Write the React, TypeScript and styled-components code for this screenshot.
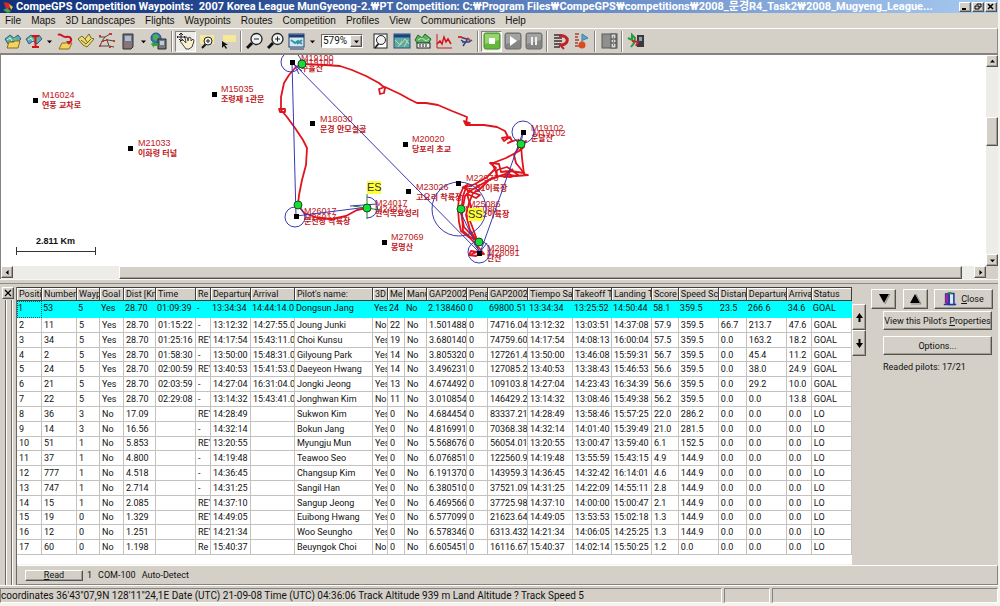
import React from "react";
import styled, { createGlobalStyle, css } from "styled-components";

const FACE = "#d4d0c8";
const SANS = `"Liberation Sans", "Noto Sans CJK KR", sans-serif`;
const COMPACT = `"Roboto", "Noto Sans CJK KR", sans-serif`;

const GlobalStyle = createGlobalStyle`
  *, *::before, *::after { box-sizing: border-box; }
  body { margin: 0; background: #f4f3ee; font-family: ${SANS}; color: #111; }
  button, select { font: inherit; color: inherit; margin: 0; border-radius: 0; }
`;

const raised = css`
  border: 1px solid;
  border-color: #fff #55534f #55534f #fff;
  box-shadow: inset -1px -1px 0 #a09d96;
`;

const Window = styled.div`
  display: flex;
  flex-direction: column;
  min-height: 100vh;
  padding-right: 2px;
`;

/* Title bar */
const TitleBar = styled.header`
  display: flex;
  align-items: center;
  gap: 2px;
  height: 13px;
  padding: 0 1px 0 2px;
  background: linear-gradient(90deg, #12317a 0%, #24488f 22%, #5f84bf 55%, #86a9da 78%, #a6caf0 100%);
`;
const Title = styled.h1`
  flex: 1;
  min-width: 0;
  margin: 0;
  overflow: hidden;
  white-space: pre;
  font-family: ${COMPACT};
  font-size: 11px;
  line-height: 13px;
  font-weight: 700;
  color: #fff;
`;
const CaptionButtons = styled.div`
  display: flex;
  gap: 1px;
`;
const CaptionButton = styled.button`
  ${raised}
  display: grid;
  place-items: center;
  width: 12px;
  height: 10px;
  padding: 0;
  background: ${FACE};
`;

/* Menu */
const MenuBar = styled.nav`
  display: flex;
  align-items: center;
  gap: 10px;
  height: 15px;
  padding: 0 5px;
  background: #d9d5cb;
`;
const MenuItem = styled.button`
  padding: 0;
  border: 0;
  background: none;
  font-size: 10px;
  line-height: 14px;
  white-space: nowrap;
`;

/* Toolbar */
const ToolBar = styled.div`
  display: flex;
  align-items: center;
  height: 27px;
  padding: 0 2px;
  background: ${FACE};
  border: solid #fff;
  border-width: 1px 0 0;
  border-right: 1px solid #8a8882;
  border-bottom: 2px solid #85837f;
`;
const Tool = styled.button<{ $on?: boolean }>`
  display: grid;
  place-items: center;
  flex: none;
  width: 21px;
  height: 21px;
  padding: 0;
  border: 1px solid;
  border-color: ${(p) => (p.$on ? "#85837f #fff #fff #85837f" : "transparent")};
  background: ${(p) => (p.$on ? "#efede8" : "none")};
`;
const DropArrow = styled.button`
  flex: none;
  width: 10px;
  height: 20px;
  padding: 0;
  border: 0;
  background: none;
  display: grid;
  place-items: center;
`;
const Separator = styled.span`
  flex: none;
  width: 2px;
  height: 21px;
  margin: 0 2px;
  border-left: 1px solid #85837f;
  border-right: 1px solid #fff;
`;
const ZoomBox = styled.label`
  position: relative;
  display: block;
  flex: none;
  width: 42px;
  margin: 0 7px 0 4px;
`;
const ZoomSelect = styled.select`
  appearance: none;
  display: block;
  width: 100%;
  height: 14px;
  padding: 0 12px 0 1px;
  border: 1px solid;
  border-color: #6b6964 #fff #fff #6b6964;
  background: #fff;
  font-family: ${COMPACT};
  font-size: 10px;
  line-height: 12px;
`;
const ZoomArrow = styled.span`
  ${raised}
  position: absolute;
  right: 1px;
  top: 1px;
  width: 12px;
  height: 12px;
  display: grid;
  place-items: center;
  background: ${FACE};
  pointer-events: none;
`;

/* Map */
const MapArea = styled.section`
  display: grid;
  grid-template-columns: minmax(0, 1fr) 12px;
  grid-template-rows: 211px 13px;
  border-left: 1px solid #85837f;
  background: ${FACE};
`;
const MapCanvas = styled.div`
  overflow: hidden;
  background: #fff;
`;
const MapSvg = styled.svg`
  display: block;
  font-family: ${SANS};
`;
const ScrollTrack = styled.div<{ $vertical?: boolean }>`
  display: flex;
  flex-direction: ${(p) => (p.$vertical ? "column" : "row")};
  background: #eeece8;
`;
const ScrollButton = styled.button`
  ${raised}
  flex: none;
  width: 12px;
  height: 12px;
  padding: 0;
  display: grid;
  place-items: center;
  background: ${FACE};
`;
const ScrollGap = styled.span<{ $grow: number }>`
  flex: ${(p) => p.$grow} 1 0;
`;
const ScrollThumb = styled.span<{ $grow: number }>`
  ${raised}
  flex: ${(p) => p.$grow} 1 0;
  background: ${FACE};
`;
const Splitter = styled.div`
  height: 8px;
  background: ${FACE};
  border-top: 1px solid #f6f5f2;
  box-shadow: inset 0 3px 0 ${FACE}, inset 0 4px 0 #8d8b86;
`;

/* Docked results panel */
const Dock = styled.section`
  display: flex;
  background: ${FACE};
`;
const Grip = styled.div`
  display: flex;
  flex-direction: column;
  align-items: center;
  flex: none;
  width: 17px;
  border-right: 1px solid #6b6964;
`;
const GripClose = styled(CaptionButton)`
  height: 12px;
`;
const GripLines = styled.div`
  flex: 1;
  width: 7px;
  margin-top: 1px;
  border: solid #6b6964;
  border-width: 0 1px;
  box-shadow: inset 1px 0 0 #fff, 1px 0 0 #fff;
`;
const DockBody = styled.div`
  flex: 1;
  min-width: 0;
  display: flex;
  flex-direction: column;
`;
const DockMain = styled.div`
  display: flex;
`;
const TableBox = styled.div`
  flex: 835 1 0;
  min-width: 0;
  height: 278px;
  overflow: hidden;
  background: #fff;
  border-bottom: 1px solid #f4f2ee;
`;
const Results = styled.table`
  width: 100%;
  height: 268px;
  table-layout: fixed;
  border-collapse: separate;
  border-spacing: 0;
  font-family: ${COMPACT};
  font-size: 9px;
  line-height: 12px;
`;
const HeadCell = styled.th`
  height: 14px;
  padding: 0 0 0 2px;
  overflow: hidden;
  white-space: nowrap;
  text-align: left;
  font-weight: 400;
  background: ${FACE};
  border: solid #3f3e3b;
  border-width: 1px 1px 1px 0;
  box-shadow: inset 1px 1px 0 #fff;
`;
const Cell = styled.td`
  padding: 0 0 0 2px;
  overflow: hidden;
  white-space: nowrap;
  border: solid #c4c2be;
  border-width: 0 1px 1px 0;
`;
const Row = styled.tr<{ $selected?: boolean }>`
  ${(p) =>
    p.$selected &&
    css`
      height: 17px;
      background: #00ffff;
      ${Cell} {
        padding: 0 0 3px 1px;
        border-color: #00ffff;
      }
      ${Cell}:first-child {
        outline: 1px dotted #14585c;
        outline-offset: -1px;
      }
    `}
`;
const SidePanel = styled.aside`
  flex: 146 1 0;
  min-width: 0;
  display: flex;
  gap: 5px;
  font-family: ${COMPACT};
  font-size: 9px;
  line-height: 12px;
`;
const Mover = styled.div`
  display: flex;
  flex-direction: column;
  width: 14px;
  margin-top: 17px;
`;
const PushButton = styled.button<{ $w?: number; $h?: number }>`
  ${raised}
  display: flex;
  align-items: center;
  justify-content: center;
  gap: 4px;
  flex: none;
  width: ${(p) => (p.$w ? `${p.$w}px` : "100%")};
  height: ${(p) => p.$h ?? 19}px;
  padding: 0;
  background: ${FACE};
  white-space: nowrap;
`;
const Actions = styled.div`
  flex: 1;
  min-width: 0;
  padding: 2px 5px 0 0;
`;
const ActionRow = styled.div`
  display: flex;
  justify-content: space-between;
`;
const ActionStack = styled.div`
  display: flex;
  flex-direction: column;
  gap: 6px;
  padding: 2px 1px 0 12px;
`;
const PilotCount = styled.p`
  margin: 0;
`;
const DeviceBar = styled.div`
  display: flex;
  align-items: center;
  gap: 4px;
  height: 20px;
  padding-left: 7px;
  border: 1px solid;
  border-color: #fff #85837f #85837f ${FACE};
  font-family: ${COMPACT};
  font-size: 9px;
`;
const DeviceText = styled.span`
  margin-right: 2px;
`;

/* Status bar */
const StatusBar = styled.footer`
  display: flex;
  gap: 2px;
  padding-top: 2px;
  background: ${FACE};
  border-top: 1px solid #fff;
`;
const StatusPane = styled.div<{ $grow: number }>`
  flex: ${(p) => p.$grow} 1 0;
  min-width: 0;
  height: 15px;
  overflow: hidden;
  white-space: nowrap;
  border: 1px solid;
  border-color: #85837f #fff #fff #85837f;
  font-family: ${COMPACT};
  font-size: 10px;
  line-height: 13px;
`;

const Icon = ({ children, size = 18 }: { children: React.ReactNode; size?: number }) => (
  <svg width={size} height={size} viewBox="0 0 18 18" fill="none" aria-hidden="true">
    {children}
  </svg>
);

const Triangle = ({ d, size = 7 }: { d: "up" | "down" | "left" | "right"; size?: number }) => {
  const paths = { up: "M0 5L3.500 1L7 5Z", down: "M0 2L3.500 6L7 2Z", left: "M5 0L1 3.500L5 7Z", right: "M2 0L6 3.500L2 7Z" };
  return (
    <svg width={size} height={size} viewBox="0 0 7 7" aria-hidden="true">
      <path d={paths[d]} fill="#000" />
    </svg>
  );
};

const BigArrow = ({ up }: { up?: boolean }) => (
  <svg width="14" height="12" viewBox="0 0 14 12" aria-hidden="true">
    <path d={up ? "M2 10L7 1L12 10Z" : "M2 1H12L7 10Z"} fill="#000" />
    <path d={up ? "M8 1L13 11H3" : "M13 1L8 11"} stroke="#85837f" fill="none" />
  </svg>
);

const mapFold = (
  <>
    <path d="M1 7L6 3L10 6L14 3L17 7L12 12L8 9L4 12Z" fill="#5ba9b8" stroke="#2e6577" />
    <path d="M5 5L8 8M10 6L13 9" stroke="#74c26f" strokeWidth="2" />
    <path d="M3 8L6 6L8 9" stroke="#d7f0e4" />
  </>
);
const device = (
  <>
    <path d="M4 2H14V15L12 17H4Z" fill="#77797f" stroke="#2e2f33" />
    <path d="M6 4H12V9H6Z" fill="#a9bcd8" />
    <path d="M6 12H8M9 12H11M7 14H10" stroke="#d65d52" />
  </>
);
const lens = (sign: React.ReactNode) => (
  <Icon>
    <path d="M6 11L1 16" stroke="#111" strokeWidth="3" />
    <circle cx="10.500" cy="7" r="5.500" fill="#eef2f3" stroke="#222" strokeWidth="1.300" />
    {sign}
  </Icon>
);

const icons = {
  openMap: (
    <Icon>
      {mapFold}
      <path d="M3 16L5 10H10L11 9H16L14 16Z" fill="#f2d463" stroke="#8d6d16" />
    </Icon>
  ),
  mapCal: (
    <Icon>
      {mapFold}
      <path d="M7 4H14M7 15H14M10.500 4V15" stroke="#d8101b" strokeWidth="2" />
    </Icon>
  ),
  trackOpen: (
    <Icon>
      <path d="M4 15L6 11H16L13 17H3Z" fill="#f2d463" stroke="#8d6d16" />
      <path d="M2 3C5 1 7 6 10 5C15 4 17 8 13 11" stroke="#c81722" strokeWidth="2" />
      <path d="M15 9L10 9L13 13Z" fill="#c81722" />
    </Icon>
  ),
  wpOpen: (
    <Icon>
      <path d="M1 7L5 4L8 7L12 2L14 6L17 7L10 15L6 13Z" fill="#eddc7a" stroke="#776819" />
      <path d="M4 8L9 12L14 7M8 7L10 10" stroke="#6f6320" />
    </Icon>
  ),
  routes: (
    <Icon>
      <path d="M1 5H7L12 2M7 5L4 9L10 8L16 9M4 9L2 14H7M9 8L11 14L16 15M7 14L11 14" stroke="#55443f" />
      <path d="M1 4H3M11 2H14M8 8H10M15 9H17M1 14H3M11 15H13M4 9H6" stroke="#c13a34" strokeWidth="2" />
    </Icon>
  ),
  device: <Icon>{device}</Icon>,
  globe: (
    <Icon>
      <circle cx="6" cy="6" r="5" fill="#3778bd" stroke="#235084" />
      <path d="M3 3L7 2L9 5L6 9L3 7Z" fill="#4fae4f" />
      <path d="M8 7H16V17H8Z" fill="#77797f" stroke="#26272b" />
      <path d="M10 9H14V13H10Z" fill="#bccbe0" />
      <path d="M1 12L4 9V11H8V14H4V16Z" fill="#2fa53c" />
    </Icon>
  ),
  hand: (
    <Icon>
      <path d="M3 9L6 8L9 11L8 5L10 5L11 9L12 5L14 6V9L16 7L17 9L15 15L12 17H9Z" fill="#f7efcf" stroke="#444" />
      <path d="M4 1V9M0 5H8M2 3L4 1L6 3M2 7L4 9L6 7M1 4L0 5L1 6M7 4L8 5L7 6" stroke="#222" />
    </Icon>
  ),
  zoomRect: (
    <Icon>
      <rect x="2" y="3" width="14" height="9" fill="#f5e999" />
      <path d="M8 12L4 16" stroke="#111" strokeWidth="2" />
      <circle cx="10" cy="9" r="4" fill="#eef2f3" stroke="#222" />
      <path d="M8 9H12M10 7V11" stroke="#222" />
    </Icon>
  ),
  select: (
    <Icon>
      <rect x="4" y="3" width="13" height="7" fill="#f5e999" />
      <path d="M3 9L3 16L5 14L7 17L8 16L6 13H9Z" fill="#111" />
    </Icon>
  ),
  zoomOut: lens(<path d="M8 7H13" stroke="#222" />),
  zoomIn: lens(<path d="M8 7H13M10.500 4.500V9.500" stroke="#222" />),
  windowFit: (
    <Icon>
      <rect x="1" y="2" width="15" height="13" fill="#d5e8ee" stroke="#203c74" />
      <path d="M1 4H16" stroke="#203c74" strokeWidth="3" />
      <path d="M3 8L7 11L10 9L14 12M14 8L9 12" stroke="#2e98a8" strokeWidth="2" />
      <path d="M2 17H16" stroke="#203c74" />
    </Icon>
  ),
  preview: (
    <Icon>
      <rect x="2" y="2" width="13" height="14" fill="#fff" stroke="#222" />
      <path d="M7 11L3 16" stroke="#222" strokeWidth="2" />
      <circle cx="9" cy="8" r="4.500" fill="#eef2f3" stroke="#222" />
    </Icon>
  ),
  mapWindow: (
    <Icon>
      <rect x="1" y="2" width="16" height="14" fill="#5fa9a9" stroke="#28527c" />
      <path d="M1 4H17" stroke="#1c3f86" strokeWidth="3" />
      <path d="M2 8L7 13L12 7L16 12M5 15L9 9M11 15L15 8" stroke="#c2dba0" />
    </Icon>
  ),
  terrain: (
    <Icon>
      <path d="M1 8L4 3L8 6L11 2L17 7L14 12H4Z" fill="#58b35c" stroke="#23662c" />
      <path d="M4 8L8 6L12 9L15 7" stroke="#c9edc0" />
      <rect x="3" y="11" width="13" height="5" fill="#eee" stroke="#222" />
      <path d="M6 12V15M9 12V15M12 12V15" stroke="#222" />
    </Icon>
  ),
  chart: (
    <Icon>
      <path d="M2 2V16H17" stroke="#c01c22" />
      <path d="M2 12L5 9L7 12L9 5L11 10L13 7L16 12" stroke="#d8101b" strokeWidth="1.500" />
    </Icon>
  ),
  plane: (
    <Icon>
      <path d="M4 5L14 8M6 10H13L16 8M7 14L11 8M5 8L8 10" stroke="#38427e" strokeWidth="1.500" />
      <path d="M2 5H6M11 6L14 8" stroke="#d13a34" strokeWidth="2" />
    </Icon>
  ),
  stop: (
    <Icon>
      <rect x="1" y="1" width="16" height="16" rx="2" fill="#63b83a" stroke="#4c8a31" />
      <path d="M2 2H16V8L2 12Z" fill="#95d56f" />
      <rect x="6" y="6" width="6" height="6" fill="#fff" />
    </Icon>
  ),
  play: (
    <Icon>
      <rect x="1" y="1" width="16" height="16" rx="2" fill="#858585" stroke="#6b6b6b" />
      <path d="M2 2H16V8L2 12Z" fill="#a3a3a3" />
      <path d="M6 4L13 9L6 14Z" fill="#fff" />
    </Icon>
  ),
  pause: (
    <Icon>
      <rect x="1" y="1" width="16" height="16" rx="2" fill="#858585" stroke="#6b6b6b" />
      <path d="M2 2H16V8L2 12Z" fill="#a3a3a3" />
      <path d="M7 5V13M11 5V13" stroke="#eee" strokeWidth="2" />
    </Icon>
  ),
  magnet: (
    <Icon>
      <path d="M2 3H10M2 6H10M2 9H10M2 12H9M2 15H8" stroke="#3a3335" strokeWidth="1.500" />
      <path d="M7 4C18 2 18 14 7 13" stroke="#c0202b" strokeWidth="3" />
      <path d="M9 14L12 17" stroke="#c0202b" strokeWidth="2" />
    </Icon>
  ),
  vario: (
    <Icon>
      <path d="M2 2H6M2 5H5M2 8H6M2 11H5M2 14H6" stroke="#a1433c" strokeWidth="1.500" />
      <path d="M9 12V2L15 6L10 8" fill="#57a6cf" stroke="#3c7ea6" />
      <circle cx="9" cy="13" r="3.500" fill="#dc4a1e" />
    </Icon>
  ),
  panel: (
    <Icon>
      <rect x="2" y="2" width="15" height="14" fill="#8f8f8f" stroke="#5b5b5b" />
      <rect x="11" y="2" width="5" height="14" fill="#d8d8d8" stroke="#555" />
      <path d="M11 7H16M11 11H16M13 5H14M13 9H14M13 13H14" stroke="#333" />
    </Icon>
  ),
  exit: (
    <Icon>
      <path d="M10 3H17V15H10Z" fill="#3a3a3d" />
      <path d="M1 6L5 8V3L8 6L7 11L4 15" stroke="#249b3c" strokeWidth="2" />
      <path d="M5 9L11 10L9 14" stroke="#c3242d" strokeWidth="2" />
      <path d="M12 5H15V9H12Z" fill="#8ba2c0" />
    </Icon>
  ),
  door: (
    <Icon size={14}>
      <path d="M1 16H17" stroke="#223a9a" strokeWidth="2" />
      <path d="M3 2H8V16L3 14Z" fill="#8b2fb0" stroke="#4a146a" />
      <path d="M8 2H14V16H8Z" fill="#d7ecfa" stroke="#223a9a" strokeWidth="2" />
      <path d="M6 1H11" stroke="#1b9a4a" strokeWidth="3" />
    </Icon>
  ),
};

type ToolSpec = { kind: "tool"; icon: keyof typeof icons; label: string; on?: boolean } | { kind: "drop" | "sep" | "zoom" };
const t = (icon: keyof typeof icons, label: string, on = false): ToolSpec => ({ kind: "tool", icon, label, on });
const drop: ToolSpec = { kind: "drop" };
const sep: ToolSpec = { kind: "sep" };
const tools: ToolSpec[] = [
  t("openMap", "Open map"), t("mapCal", "Calibrate map"), drop,
  t("trackOpen", "Open track"), t("wpOpen", "Open waypoints"), t("routes", "Open route"), t("device", "GPS"), drop,
  t("globe", "Live position"), sep,
  t("hand", "Pan", true), t("zoomRect", "Zoom window"), t("select", "Select"), sep,
  t("zoomOut", "Zoom out"), t("zoomIn", "Zoom in"), t("windowFit", "Fit"), drop, { kind: "zoom" },
  t("preview", "Find"), t("mapWindow", "Map window"), t("terrain", "3D view"), t("chart", "Graph"), t("plane", "Airspace"), sep,
  t("stop", "Stop", true), t("play", "Play"), t("pause", "Pause"), sep,
  t("magnet", "Magnet"), t("vario", "Vario"), sep, t("panel", "Data panel"), sep, t("exit", "Exit"),
];

const columns: [string, number][] = [
  ["Positio", 25], ["Number", 35], ["Wayp", 23], ["Goal", 24], ["Dist [Km", 32], ["Time", 40], ["Re", 15],
  ["Departure", 40], ["Arrival", 44], ["Pilot's name:", 78], ["3D", 15], ["Me", 17], ["Manu", 22], ["GAP2002", 40],
  ["Pena", 21], ["GAP2002", 40], ["Tiempo Sal", 45], ["Takeoff T", 39], ["Landing T", 40], ["Score", 27],
  ["Speed Sc", 40], ["Distan", 28], ["Departure", 40], ["Arrival", 25], ["Status", 40],
];

const pilots = `1|53|5|Yes|28.70|01:09:39|-|13:34:34|14:44:14.0|Dongsun Jang|Yes|24|No|2.138460|0|69800.518|13:34:34|13:25:52|14:50:44|58.1|359.5|23.5|266.6|34.6|GOAL
2|11|5|Yes|28.70|01:15:22|-|13:12:32|14:27:55.0|Joung Junki|No|22|No|1.501488|0|74716.041|13:12:32|13:03:51|14:37:08|57.9|359.5|66.7|213.7|47.6|GOAL
3|34|5|Yes|28.70|01:25:16|RE'|14:17:54|15:43:11.0|Choi Kunsu|Yes|19|No|3.680140|0|74759.601|14:17:54|14:08:13|16:00:04|57.5|359.5|0.0|163.2|18.2|GOAL
4|2|5|Yes|28.70|01:58:30|-|13:50:00|15:48:31.0|Gilyoung Park|Yes|14|No|3.805320|0|127261.44|13:50:00|13:46:08|15:59:31|56.7|359.5|0.0|45.4|11.2|GOAL
5|24|5|Yes|28.70|02:00:59|RE'|13:40:53|15:41:53.0|Daeyeon Hwang|Yes|14|No|3.496231|0|127085.22|13:40:53|13:38:43|15:46:53|56.6|359.5|0.0|38.0|24.9|GOAL
6|21|5|Yes|28.70|02:03:59|-|14:27:04|16:31:04.0|Jongki Jeong|Yes|13|No|4.674492|0|109103.89|14:27:04|14:23:43|16:34:39|56.6|359.5|0.0|29.2|10.0|GOAL
7|22|5|Yes|28.70|02:29:08|-|13:14:32|15:43:41.0|Jonghwan Kim|No|11|No|3.010854|0|146429.23|13:14:32|13:08:46|15:49:38|56.2|359.5|0.0|0.0|13.8|GOAL
8|36|3|No|17.09||RE'|14:28:49||Sukwon Kim|Yes|0|No|4.684454|0|83337.219|14:28:49|13:58:46|15:57:25|22.0|286.2|0.0|0.0|0.0|LO
9|14|3|No|16.56||-|14:32:14||Bokun Jang|Yes|0|No|4.816991|0|70368.384|14:32:14|14:01:40|15:39:49|21.0|281.5|0.0|0.0|0.0|LO
10|51|1|No|5.853||RE'|13:20:55||Myungju Mun|Yes|0|No|5.568676|0|56054.011|13:20:55|13:00:47|13:59:40|6.1|152.5|0.0|0.0|0.0|LO
11|37|1|No|4.800||-|14:19:48||Teawoo Seo|Yes|0|No|6.076851|0|122560.96|14:19:48|13:55:59|15:43:15|4.9|144.9|0.0|0.0|0.0|LO
12|777|1|No|4.518||-|14:36:45||Changsup Kim|Yes|0|No|6.191370|0|143959.34|14:36:45|14:32:42|16:14:01|4.6|144.9|0.0|0.0|0.0|LO
13|747|1|No|2.714||-|14:31:25||Sangil Han|Yes|0|No|6.380510|0|37521.097|14:31:25|14:22:09|14:55:11|2.8|144.9|0.0|0.0|0.0|LO
14|15|1|No|2.085||RE'|14:37:10||Sangup Jeong|Yes|0|No|6.469566|0|37725.982|14:37:10|14:00:00|15:00:47|2.1|144.9|0.0|0.0|0.0|LO
15|19|0|No|1.329||RE'|14:49:05||Euibong Hwang|Yes|0|No|6.577099|0|21623.649|14:49:05|13:53:53|15:02:18|1.3|144.9|0.0|0.0|0.0|LO
16|12|0|No|1.251||RE'|14:21:34||Woo Seungho|Yes|0|No|6.578346|0|6313.4324|14:21:34|14:06:05|14:25:25|1.3|144.9|0.0|0.0|0.0|LO
17|60|0|No|1.198||Re|15:40:37||Beuyngok Choi|No|0|No|6.605451|0|16116.677|15:40:37|14:02:14|15:50:25|1.2|0.0|0.0|0.0|0.0|LO`
  .split("\n")
  .map((line) => line.split("|"));

/* Label x/y is the baseline of the waypoint code; the name sits below it. */
const waypoints: { x: number; y: number; lx: number; ly: number; code: string; name: string }[] = [
  { x: 35, y: 100, lx: 42, ly: 98, code: "M16024", name: "연풍 교차로" },
  { x: 214, y: 94, lx: 221, ly: 92, code: "M15035", name: "조령재 1관문" },
  { x: 130, y: 148, lx: 138, ly: 146, code: "M21033", name: "이화령 터널" },
  { x: 312, y: 123, lx: 320, ly: 122, code: "M18030", name: "문경 안모실골" },
  { x: 405, y: 144, lx: 412, ly: 142, code: "M20020", name: "당포리 초교" },
  { x: 408, y: 191, lx: 416, ly: 190, code: "M23026", name: "고요리 착륙장" },
  { x: 384, y: 242, lx: 391, ly: 240, code: "M27069", name: "봉명산" },
  { x: 292, y: 62, lx: 301, ly: 61, code: "M19100", name: "주흘산" },
  { x: 296, y: 216, lx: 304, ly: 214, code: "M26017", name: "문전장 착륙장" },
  { x: 367, y: 208, lx: 375, ly: 206, code: "M24017", name: "현식목요성리" },
  { x: 458, y: 183, lx: 466, ly: 181, code: "M22973", name: "문경1이륙장" },
  { x: 461, y: 210, lx: 468, ly: 207, code: "M25086", name: "문경2이륙장" },
  { x: 523, y: 132, lx: 531, ly: 131, code: "M19102", name: "운달산" },
  { x: 479, y: 253, lx: 487, ly: 251, code: "M28091", name: "단산" },
];
const echoes: [number, number, string][] = [
  [301, 65, "M19100"], [304, 220, "M26017"], [375, 212, "M24017"], [533, 136, "M19102"], [487, 256, "M28091"], [465, 212, "M25086"],
];

const FlightMap = () => (
  <MapSvg width="985" height="211" viewBox="1 55 985 211" role="img" aria-label="Competition map">
    <g fill="#c01822">
      {waypoints.map((w) => (
        <g key={w.code}>
          <text x={w.lx} y={w.ly} fontSize="9">{w.code}</text>
          <text x={w.lx} y={w.ly + 10} fontSize="8" fontWeight="700">{w.name}</text>
        </g>
      ))}
      {echoes.map(([x, y, s]) => (
        <text key={s} x={x} y={y} fontSize="9">{s}</text>
      ))}
    </g>
    <g fill="none" stroke="#e0141c" strokeWidth="1.800" strokeLinejoin="round">
      <path d="M302 64L296 67L289 75L284 83L281 97L281 110L287 117L295 128L303 140L307 148L306 165L302 180L299 195L298 205L304 213L318 218L332 219L346 216L357 210L367 208" />
      <path d="M279 109H285V112H280ZM302 64L325 65L340 66L352 70L366 76L379 83L385 88L384 93L380 94L379 89L385 87L400 94L409 99L417 103L426 103L438 105L452 111L467 117L466 124L470 123L464 121L466 125L484 125L497 127L505 131L508 137L502 138L504 141L510 137L512 141L508 143L516 140L521 144" />
      <path d="M521 144L522 158L524 174L528 175L516 176L505 174L496 177L497 170L507 167L513 171L518 175L511 177L500 176L492 178L482 184L470 191L465 196L462 212L463 231L470 237L478 241" />
      <path d="M521 150L506 158L493 163L490 163L496 168L487 177L475 184L464 188L471 192L480 195L476 198L467 194L471 207L468 216L472 226L477 240" />
      <path d="M521 144L514 155L516 163L524 173L510 171L501 172L499 164L492 163L498 177L489 180L479 190L473 193L469 203L466 215L470 230L478 243" />
      <path d="M464 186L459 197L458 209L459 222L461 231L470 238L480 249L484 254L479 254L476 256L469 255L471 251L477 252L472 254L478 251" />
      <path d="M462 188L467 185L463 196L461 213L464 227L478 242M518 139L524 147L520 150L526 141L517 145M505 171L512 176L504 177L513 169" />
    </g>
    <g fill="none" stroke="#3a38b4">
      <circle cx="291" cy="62" r="10" />
      <circle cx="295" cy="217" r="10" />
      <path d="M367 197A10 10 0 0 1 367 218M350 206L377 204" />
      <circle cx="459" cy="209" r="27" />
      <circle cx="523" cy="132" r="11" />
      <circle cx="479" cy="252" r="11" />
      <path d="M292 62L296 216L368 207M292 62L480 253L523 132M480 253L459 209M523 132L521 144M299 74L294 64L302 71M474 244L480 252L487 243" />
    </g>
    {waypoints.filter((w) => w.code !== "M24017" && w.code !== "M25086").map((w) => (
      <rect key={w.code} x={w.x - 2} y={w.y - 2} width="5" height="5" fill="#000" />
    ))}
    <path d="M367 194V219M353 206L380 210" stroke="#2a7044" />
    {[[302, 64], [298, 205], [367, 208], [461, 209], [479, 242], [521, 144]].map(([x, y]) => (
      <circle key={`${x}-${y}`} cx={x} cy={y} r="4" fill="#15dc36" stroke="#14501e" />
    ))}
    <rect x="367" y="181" width="14" height="13" fill="#ffff33" />
    <text x="367" y="191" fontSize="11" fill="#333">ES</text>
    <rect x="468" y="208" width="15" height="13" fill="#ffff33" />
    <text x="468" y="218" fontSize="11" fill="#333">SS</text>
    <text x="36" y="244" fontSize="9" fontWeight="700" fill="#111">2.811 Km</text>
    <path d="M16.500 247V255M95.500 247V255M16 251.500H96" stroke="#333" />
  </MapSvg>
);

const Toolbar = () => (
  <ToolBar role="toolbar" aria-label="Main">
    {tools.map((item, i) => {
      if (item.kind === "tool")
        return <Tool key={i} $on={item.on} aria-label={item.label}>{icons[item.icon]}</Tool>;
      if (item.kind === "drop")
        return <DropArrow key={i} aria-label="More"><Triangle d="down" size={5} /></DropArrow>;
      if (item.kind === "zoom")
        return (
          <ZoomBox key={i}>
            <ZoomSelect aria-label="Zoom" defaultValue="579%"><option>579%</option></ZoomSelect>
            <ZoomArrow><Triangle d="down" size={5} /></ZoomArrow>
          </ZoomBox>
        );
      return <Separator key={i} />;
    })}
  </ToolBar>
);

export default function App() {
  return (
    <>
      <GlobalStyle />
      <Window>
        <TitleBar>
          <svg width="12" height="12" viewBox="0 0 12 12" aria-hidden="true">
            <path d="M2 1L7 2L9 6L6 8L3 6Z" fill="#d9262b" />
            <path d="M7 3L11 6L9 9Z" fill="#e8c33a" />
            <path d="M1 9L5 7L9 10L6 12Z" fill="#48a448" />
          </svg>
          <Title>{"CompeGPS Competition Waypoints:  2007 Korea League MunGyeong-2.₩PT Competition: C:₩Program Files₩CompeGPS₩competitions₩2008_문경R4_Task2₩2008_Mugyeng_League..."}</Title>
          <CaptionButtons>
            <CaptionButton aria-label="Minimize">
              <svg width="8" height="7" viewBox="0 0 8 7"><path d="M1 6H5" stroke="#000" strokeWidth="2" /></svg>
            </CaptionButton>
            <CaptionButton aria-label="Restore">
              <svg width="8" height="7" viewBox="0 0 8 7" fill="none" stroke="#000"><path d="M3 2V1H7V4H5M1 3H5V6H1Z" /></svg>
            </CaptionButton>
            <CaptionButton aria-label="Close">
              <svg width="8" height="7" viewBox="0 0 8 7"><path d="M1 1L6 6M6 1L1 6" stroke="#000" strokeWidth="1.500" /></svg>
            </CaptionButton>
          </CaptionButtons>
        </TitleBar>
        <MenuBar>
          {["File", "Maps", "3D Landscapes", "Flights", "Waypoints", "Routes", "Competition", "Profiles", "View", "Communications", "Help"].map((m) => (
            <MenuItem key={m}>{m}</MenuItem>
          ))}
        </MenuBar>
        <Toolbar />
        <MapArea>
          <MapCanvas><FlightMap /></MapCanvas>
          <ScrollTrack $vertical>
            <ScrollButton aria-label="Scroll up"><Triangle d="up" size={5} /></ScrollButton>
            <ScrollGap $grow={51} />
            <ScrollThumb $grow={27} />
            <ScrollGap $grow={109} />
            <ScrollButton aria-label="Scroll down"><Triangle d="down" size={5} /></ScrollButton>
          </ScrollTrack>
          <ScrollTrack>
            <ScrollButton aria-label="Scroll left"><Triangle d="left" size={5} /></ScrollButton>
            <ScrollGap $grow={106} />
            <ScrollThumb $grow={843} />
            <ScrollGap $grow={12} />
            <ScrollButton aria-label="Scroll right"><Triangle d="right" size={5} /></ScrollButton>
          </ScrollTrack>
        </MapArea>
        <Splitter />
        <Dock>
          <Grip>
            <GripClose aria-label="Close panel">
              <svg width="8" height="8" viewBox="0 0 8 8"><path d="M1 1L7 7M7 1L1 7" stroke="#000" strokeWidth="1.300" /></svg>
            </GripClose>
            <GripLines />
          </Grip>
          <DockBody>
            <DockMain>
              <TableBox>
                <Results>
                  <colgroup>
                    {columns.map(([, w], i) => <col key={i} style={{ width: `${(w / 835) * 100}%` }} />)}
                  </colgroup>
                  <thead>
                    <tr>{columns.map(([name], i) => <HeadCell key={i} scope="col">{name}</HeadCell>)}</tr>
                  </thead>
                  <tbody>
                    {pilots.map((row, r) => (
                      <Row key={row[0]} $selected={r === 0}>
                        {row.map((v, i) => <Cell key={i}>{v}</Cell>)}
                      </Row>
                    ))}
                  </tbody>
                </Results>
              </TableBox>
              <SidePanel>
                <Mover>
                  <PushButton $h={26} aria-label="Move up">
                    <svg width="7" height="9" viewBox="0 0 7 9"><path d="M3.500 0L7 5H4.500V9H2.500V5H0Z" /></svg>
                  </PushButton>
                  <PushButton $h={26} aria-label="Move down">
                    <svg width="7" height="9" viewBox="0 0 7 9"><path d="M3.500 9L7 4H4.500V0H2.500V4H0Z" /></svg>
                  </PushButton>
                </Mover>
                <Actions>
                  <ActionRow>
                    <PushButton $w={25} $h={20} aria-label="Next pilot"><BigArrow /></PushButton>
                    <PushButton $w={25} $h={20} aria-label="Previous pilot"><BigArrow up /></PushButton>
                    <PushButton $w={59} $h={20}>{icons.door}<span><u>C</u>lose</span></PushButton>
                  </ActionRow>
                  <ActionStack>
                    <PushButton><span>View this Pilot's <u>P</u>roperties</span></PushButton>
                    <PushButton>Options...</PushButton>
                    <PilotCount>Readed pilots: 17/21</PilotCount>
                  </ActionStack>
                </Actions>
              </SidePanel>
            </DockMain>
            <DeviceBar>
              <PushButton $w={58} $h={11}><span><u>R</u>ead</span></PushButton>
              <DeviceText>1</DeviceText>
              <DeviceText>COM-100</DeviceText>
              <DeviceText>Auto-Detect</DeviceText>
            </DeviceBar>
          </DockBody>
        </Dock>
        <StatusBar>
          <StatusPane $grow={724}>coordinates 36'43''07,9N 128'11''24,1E Date (UTC) 21-09-08 Time (UTC) 04:36:06 Track Altitude 939 m Land Altitude ? Track Speed 5</StatusPane>
          <StatusPane $grow={45} />
          <StatusPane $grow={225} />
        </StatusBar>
      </Window>
    </>
  );
}
